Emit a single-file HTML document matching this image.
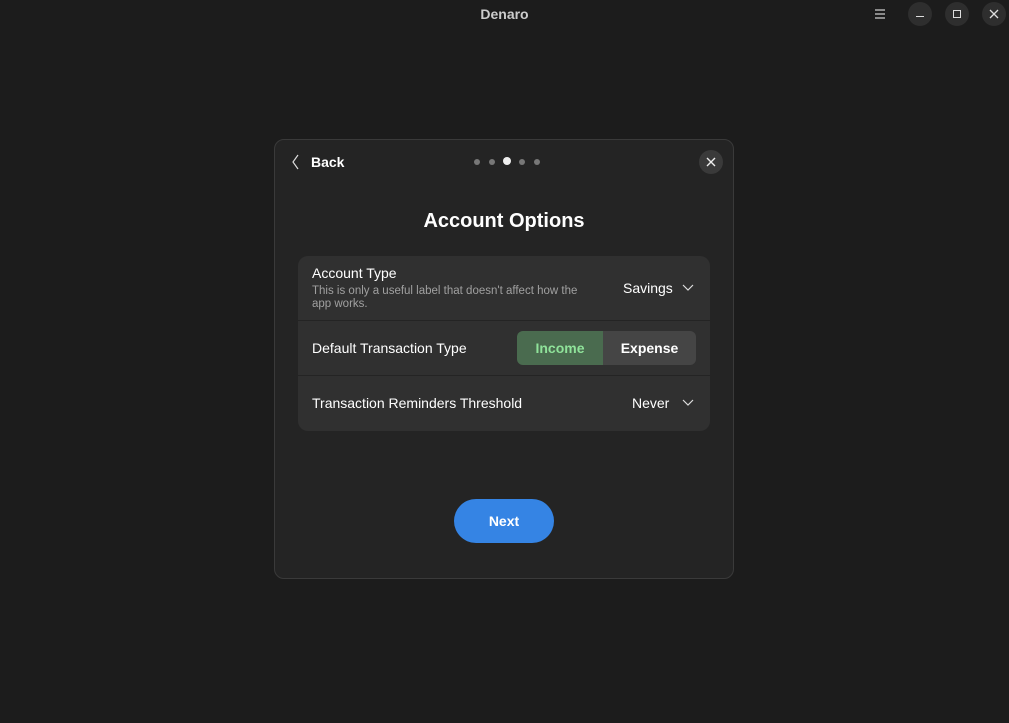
<!DOCTYPE html>
<html><head><style>
*{margin:0;padding:0;box-sizing:border-box}
body{width:1009px;height:723px;background:#1c1c1c;font-family:"Liberation Sans",sans-serif;color:#fff;position:relative;overflow:hidden}
.abs{position:absolute}
.title{left:0;right:0;top:6px;text-align:center;font-weight:bold;font-size:14px;color:#ccc}
.wb{width:24px;height:24px;border-radius:50%;background:#2e2e2e;top:2px}
.dlg{left:274px;top:139px;width:460px;height:440px;background:#242424;border:1px solid #3a3a3a;border-radius:10px}
.card{left:23px;top:116px;width:412px;height:175px;background:#303030;border-radius:10px}
.sep{left:0;width:412px;height:1px;background:#242424}
.dot{width:6px;height:6px;border-radius:50%;background:#777;top:19px}
</style></head><body>
<div class="abs title">Denaro</div>
<svg class="abs" style="left:874px;top:8px" width="12" height="12"><path d="M1 2h10M1 6h10M1 10h10" stroke="#ccc" stroke-width="1.2"/></svg>
<div class="abs wb" style="left:908px"></div><div class="abs" style="left:916px;top:16px;width:8px;height:1px;background:#ddd"></div>
<div class="abs wb" style="left:945px"></div><div class="abs" style="left:953px;top:10px;width:8px;height:8px;border:1px solid #ddd"></div>
<div class="abs wb" style="left:982px"></div><svg class="abs" style="left:989px;top:9px" width="10" height="10"><path d="M1 1l8 8M9 1l-8 8" stroke="#ddd" stroke-width="1.3"/></svg>
<div class="abs dlg">
<svg class="abs" style="left:17px;top:14px" width="8" height="16"><path d="M6 1L1 8l5 7" stroke="#ddd" fill="none" stroke-width="1.2"/></svg>
<div class="abs" style="left:36px;top:14px;font-weight:bold;font-size:14px">Back</div>
<div class="abs dot" style="left:199px"></div><div class="abs dot" style="left:214px"></div>
<div class="abs dot" style="left:228px;top:17px;width:8px;height:8px;background:#eee"></div>
<div class="abs dot" style="left:244px"></div><div class="abs dot" style="left:259px"></div>
<div class="abs" style="left:424px;top:10px;width:24px;height:24px;border-radius:50%;background:#3a3a3a"></div>
<svg class="abs" style="left:431px;top:17px" width="10" height="10"><path d="M1 1l8 8M9 1l-8 8" stroke="#eee" stroke-width="1.4"/></svg>
<div class="abs" style="left:0;right:0;top:70px;text-align:center;font-weight:bold;font-size:20px">Account Options</div>
<div class="abs card">
<div class="abs" style="left:14px;top:9px;font-size:14px">Account Type</div>
<div class="abs" style="left:14px;top:29px;font-size:11.5px;color:#a0a0a0;line-height:13px;width:280px">This is only a useful label that doesn't affect how the app works.</div>
<div class="abs" style="left:325px;top:24px;font-size:14px">Savings</div>
<svg class="abs" style="left:384px;top:28px" width="12" height="8"><path d="M1 1l5 5 5-5" stroke="#ddd" fill="none" stroke-width="1.2"/></svg>
<div class="abs sep" style="top:64px"></div>
<div class="abs" style="left:14px;top:84px;font-size:14px">Default Transaction Type</div>
<div class="abs" style="left:219px;top:75px;width:86px;height:34px;background:#4a6b4f;border-radius:6px 0 0 6px;color:#8fe39a;font-weight:bold;font-size:14px;text-align:center;line-height:34px">Income</div>
<div class="abs" style="left:305px;top:75px;width:93px;height:34px;background:#454545;border-radius:0 6px 6px 0;font-weight:bold;font-size:14px;text-align:center;line-height:34px">Expense</div>
<div class="abs sep" style="top:119px"></div>
<div class="abs" style="left:14px;top:139px;font-size:14px">Transaction Reminders Threshold</div>
<div class="abs" style="left:334px;top:139px;font-size:14px">Never</div>
<svg class="abs" style="left:384px;top:143px" width="12" height="8"><path d="M1 1l5 5 5-5" stroke="#ddd" fill="none" stroke-width="1.2"/></svg>
</div>
<div class="abs" style="left:179px;top:359px;width:100px;height:44px;border-radius:22px;background:#3584e4;font-weight:bold;font-size:14px;text-align:center;line-height:44px">Next</div>
</div>
</body></html>
